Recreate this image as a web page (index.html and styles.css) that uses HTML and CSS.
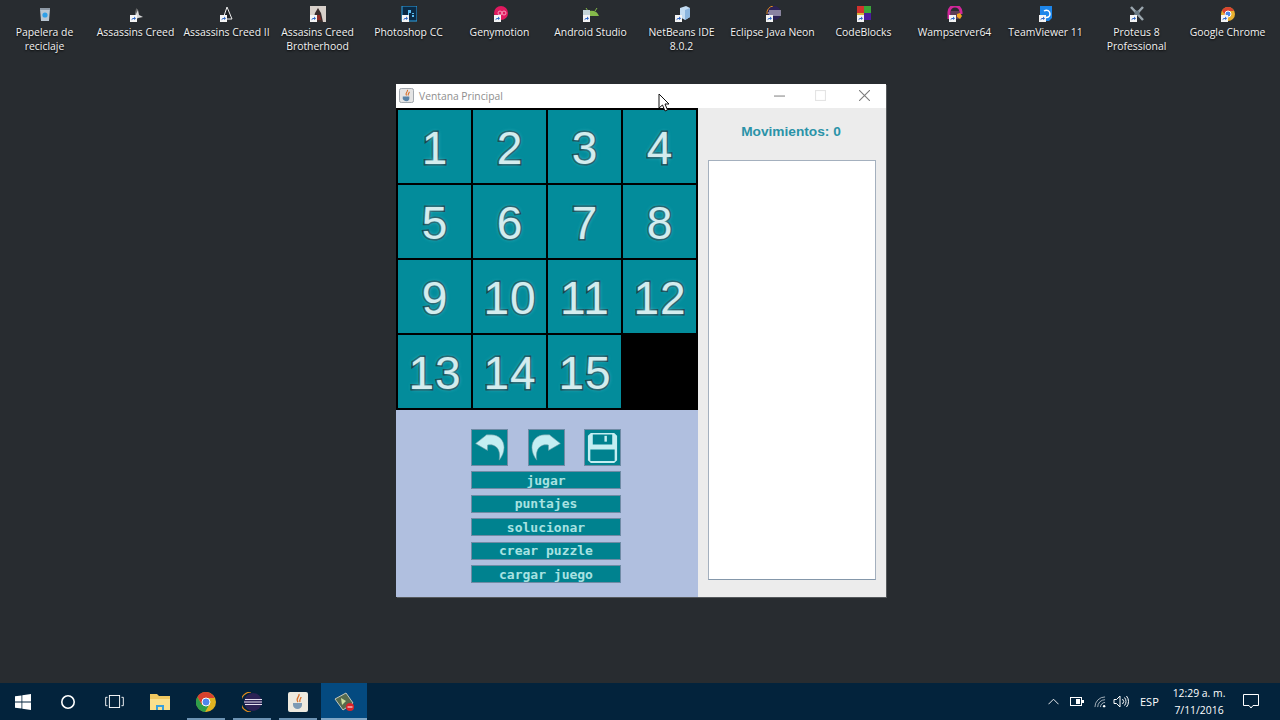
FILE: index.html
```html
<!DOCTYPE html>
<html lang="es">
<head>
  <meta charset="UTF-8">
  <title>Ventana Principal</title>
  <link rel="stylesheet" href="styles.css">
</head>
<body>
  <svg class="sprite" width="0" height="0">
    <symbol id="arrow" viewBox="0 0 7 7">
      <rect width="7" height="7" fill="#f4f4f4"/>
      <path d="M1.5 5.5 C1.5 3.5 2.5 3 4 3 V1.6 L6 3.5 4 5 V4 C3 4 2.2 4.4 1.5 5.5Z" fill="#2a66c8"/>
    </symbol>
  </svg>

  <main class="desktop">
    <section class="icons">
      <div class="icon">
        <svg viewBox="0 0 16 16"><path d="M3 3h10l-1 12H4z" fill="#b9c6d2"/><path d="M3 2h10v2H3z" fill="#8d99a5"/><circle cx="8" cy="9" r="2.6" fill="#2f9fe8"/></svg>
        <span>Papelera de<br>reciclaje</span>
      </div>
      <div class="icon">
        <svg viewBox="0 0 16 16"><path d="M8 3l2 1 1 5 4 2-5 1-3 2z" fill="#d9d9d9"/><path d="M8 2l2 2-2 4z" fill="#666"/><use href="#arrow" x="2" y="9" width="7" height="7"/></svg>
        <span>Assassins Creed</span>
      </div>
      <div class="icon">
        <svg viewBox="0 0 16 16"><path d="M8 1l5 12H4z" fill="#1f2226" stroke="#eee" stroke-width="1"/><use href="#arrow" x="1" y="9" width="7" height="7"/></svg>
        <span>Assassins Creed II</span>
      </div>
      <div class="icon">
        <svg viewBox="0 0 16 16"><rect width="16" height="16" fill="#d8d0ca"/><path d="M8 2l3 5 2 9H3l2-9z" fill="#3a2c2c"/><path d="M6 9h4l1 5H7z" fill="#8c2a25"/><use href="#arrow" x="0" y="9" width="7" height="7"/></svg>
        <span>Assasins Creed<br>Brotherhood</span>
      </div>
      <div class="icon">
        <svg viewBox="0 0 16 16"><rect x="1" y="0" width="15" height="15" fill="#0b2a45" stroke="#2fa3e6"/><rect x="6" y="4" width="7" height="7" fill="#0b2a45"/><path d="M7 4h3v3H8v3H7zM11 7h2v1h-2v1h2v2h-2z" fill="#5bbcf0"/><use href="#arrow" x="1" y="9" width="7" height="7"/></svg>
        <span>Photoshop CC</span>
      </div>
      <div class="icon">
        <svg viewBox="0 0 16 16"><circle cx="9" cy="7" r="7" fill="#e0195f"/><circle cx="8" cy="7" r="2" fill="none" stroke="#f59ab9"/><circle cx="12" cy="7" r="2" fill="none" stroke="#f59ab9"/><use href="#arrow" x="2" y="9" width="7" height="7"/></svg>
        <span>Genymotion</span>
      </div>
      <div class="icon">
        <svg viewBox="0 0 16 16"><path d="M1 13a8 8 0 0 1 15 0z" transform="translate(0 -3)" fill="#84b94a"/><path d="M3 2l2 3M14 2l-2 3" stroke="#84b94a"/><rect x="0" y="4" width="7" height="8" fill="#c4d4d8"/><use href="#arrow" x="0" y="9" width="7" height="7"/></svg>
        <span>Android Studio</span>
      </div>
      <div class="icon">
        <svg viewBox="0 0 16 16"><path d="M6 2l6-2 4 2v9l-5 3-5-3z" fill="#c3dcf2"/><path d="M11 4v10l5-3V2z" fill="#8bb5de"/><use href="#arrow" x="1" y="9" width="7" height="7"/></svg>
        <span>NetBeans IDE<br>8.0.2</span>
      </div>
      <div class="icon">
        <svg viewBox="0 0 16 16"><circle cx="9" cy="7" r="7" fill="#2c2255"/><path d="M4 5h12M3 7h13M4 9h12" stroke="#e6e2f0"/><path d="M8 0a7 7 0 0 0-6 8" fill="none" stroke="#e08a1e"/><use href="#arrow" x="1" y="9" width="7" height="7"/></svg>
        <span>Eclipse Java Neon</span>
      </div>
      <div class="icon">
        <svg viewBox="0 0 16 16"><rect x="1" y="0" width="7" height="7" fill="#d2322d"/><rect x="8" y="0" width="7" height="7" fill="#3aa53a"/><rect x="8" y="7" width="7" height="7" fill="#4a1d9c"/><rect x="1" y="7" width="7" height="7" fill="#d9b23a"/><use href="#arrow" x="1" y="9" width="7" height="7"/></svg>
        <span>CodeBlocks</span>
      </div>
      <div class="icon">
        <svg viewBox="0 0 16 16"><path d="M2 13V6a6 6 0 0 1 12 0v2" fill="none" stroke="#d0269a" stroke-width="3"/><rect x="4" y="5" width="8" height="8" fill="#5a3d56"/><path d="M10 8l3-1 2 3-2 3-3-2z" fill="#f0a020"/><use href="#arrow" x="2" y="9" width="7" height="7"/></svg>
        <span>Wampserver64</span>
      </div>
      <div class="icon">
        <svg viewBox="0 0 16 16"><path d="M2 0h12v12l-3 3H2z" fill="#1d86ea"/><path d="M6 5c3-2 6 0 6 3s-3 4-5 3" fill="none" stroke="#fff" stroke-width="1.5"/><use href="#arrow" x="1" y="9" width="7" height="7"/></svg>
        <span>TeamViewer 11</span>
      </div>
      <div class="icon">
        <svg viewBox="0 0 16 16"><path d="M2 1l12 13M14 1L2 14" stroke="#9aa6ae" stroke-width="2.5"/><circle cx="8" cy="7" r="2.5" fill="#6a7a85"/><use href="#arrow" x="1" y="9" width="7" height="7"/></svg>
        <span>Proteus 8<br>Professional</span>
      </div>
      <div class="icon">
        <svg viewBox="0 0 16 16"><circle cx="8" cy="8" r="7" fill="#e8b030"/><path d="M8 1a7 7 0 0 0-6 3.5L5 9l3-4h6A7 7 0 0 0 8 1z" fill="#d8432f"/><circle cx="8" cy="8" r="3" fill="#4a86e8" stroke="#fff"/><use href="#arrow" x="1" y="9" width="7" height="7"/></svg>
        <span>Google Chrome</span>
      </div>
    </section>

    <div class="window">
      <header class="titlebar">
        <svg class="java-icon" viewBox="0 0 16 16">
          <rect x="0.5" y="0.5" width="15" height="15" rx="2" fill="#e4e4e4" stroke="#9aa0a6"/>
          <path d="M9 2c1 2-3 3-1 6M11 4c0 2-2 2-1 4" fill="none" stroke="#d8702a" stroke-width="1.2"/>
          <path d="M4 9h7v2c0 2-1 3-3 3s-4-1-4-3z" fill="#5a84a8"/>
        </svg>
        <span class="title">Ventana Principal</span>
        <div class="controls">
          <svg viewBox="0 0 10 10"><path d="M0 5.500h10" stroke="#8a8a8a"/></svg>
          <svg viewBox="0 0 10 10"><rect x="0.5" y="0.5" width="9" height="9" fill="none" stroke="#e4e4e4"/></svg>
          <svg class="close" viewBox="0 0 10 10"><path d="M0 0l10 10M10 0L0 10" stroke="#7c7c7c"/></svg>
        </div>
      </header>
      <div class="content">
        <div class="left">
          <div class="board">
            <div class="tile">1</div>
            <div class="tile">2</div>
            <div class="tile">3</div>
            <div class="tile">4</div>
            <div class="tile">5</div>
            <div class="tile">6</div>
            <div class="tile">7</div>
            <div class="tile">8</div>
            <div class="tile">9</div>
            <div class="tile">10</div>
            <div class="tile">11</div>
            <div class="tile">12</div>
            <div class="tile">13</div>
            <div class="tile">14</div>
            <div class="tile">15</div>
            <div class="tile empty"></div>
          </div>
          <div class="actions">
            <div class="tools">
              <button class="tool" aria-label="deshacer">
                <svg viewBox="0 0 36 36"><path d="M3.700 14L15 5h5c8 0 13 6 13 13 0 5-2 9-5 13 1-6 0-11-3-13.500-3-2.500-6-2.500-9-2v5.500z" fill="#c4eef2" stroke="#6f9ca6" stroke-width="0.6"/></svg>
              </button>
              <button class="tool" aria-label="rehacer">
                <svg viewBox="0 0 36 36"><path d="M32.300 14L21 5h-5C8 5 3 11 3 18c0 5 2 9 5 13-1-6 0-11 3-13.500 3-2.500 6-2.500 9-2v5.500z" fill="#c4eef2" stroke="#6f9ca6" stroke-width="0.6"/></svg>
              </button>
              <button class="tool" aria-label="guardar">
                <svg viewBox="0 0 36 36">
                  <path d="M6 3h24l3 3v25l-3 3H6l-3-3V6z" fill="#c4eef2"/>
                  <path d="M8 4.500h20V15H8zM5.500 20h25v12h-25z" fill="#00828f"/>
                  <rect x="20" y="6" width="2.500" height="6" fill="#c4eef2"/>
                </svg>
              </button>
            </div>
            <button class="btn">jugar</button>
            <button class="btn">puntajes</button>
            <button class="btn">solucionar</button>
            <button class="btn">crear puzzle</button>
            <button class="btn">cargar juego</button>
          </div>
        </div>
        <aside class="side">
          <p class="moves">Movimientos: 0</p>
          <div class="log"></div>
        </aside>
      </div>
    </div>

    <svg class="cursor" viewBox="0 0 12 20">
      <path d="M1 1v14l3.5-3 2.5 6 2.5-1-2.5-6H11z" fill="#fff" stroke="#111"/>
    </svg>
  </main>

  <footer class="taskbar">
    <div class="task"><svg viewBox="0 0 16 16"><path d="M0 2.300l6.500-.9v6.200H0zM7.300 1.300L16 0v7.600H7.300zM0 8.400h6.500v6.200L0 13.700zM7.300 8.400H16V16l-8.700-1.200z" fill="#fff"/></svg></div>
    <div class="task"><svg viewBox="0 0 16 16"><circle cx="8" cy="8" r="6.200" fill="none" stroke="#fff" stroke-width="1.600"/></svg></div>
    <div class="task"><svg class="wide" viewBox="0 0 20 14"><rect x="4.500" y="0.500" width="11" height="13" fill="none" stroke="#fff"/><path d="M2.500 2.500H.5v9h2M17.500 2.500h2v9h-2" fill="none" stroke="#fff"/></svg></div>
    <div class="task app"><svg class="big" viewBox="0 0 20 18"><path d="M0 1h7l2 2h11v14H0z" fill="#f0c860"/><path d="M0 6h20v11H0z" fill="#fbe08c"/><path d="M6 17v-5h8v5h-2v-3H8v3z" fill="#3aa0dc"/></svg></div>
    <div class="task app open"><svg class="big" viewBox="0 0 20 20"><circle cx="10" cy="10" r="10" fill="#e0b320"/><path d="M10 0a10 10 0 0 0-8.700 5L6 13l4-7h8.600A10 10 0 0 0 10 0z" fill="#d8412f"/><path d="M1.300 5A10 10 0 0 0 9 20l4-7-7 0z" fill="#2e9e4a"/><circle cx="10" cy="10" r="4" fill="#4f86ec" stroke="#fff"/></svg></div>
    <div class="task app open"><svg class="big" viewBox="0 0 20 20"><circle cx="11" cy="10" r="9" fill="#2c2255"/><path d="M3 7.500h17M2 10h18M3 12.500h17" stroke="#e6e2f0"/><path d="M9 0a10 10 0 0 0 0 20" fill="none" stroke="#e08a1e" stroke-width="1.200"/></svg></div>
    <div class="task app open"><svg class="big" viewBox="0 0 20 20"><rect width="20" height="20" rx="2" fill="#eeeadf"/><path d="M11 2c1 3-4 4-1 8M13 5c0 2-2 2-1 5" fill="none" stroke="#d8702a" stroke-width="1.300"/><path d="M5 11h9v2c0 2-2 4-4.500 4S5 15 5 13z" fill="#7d9bb5"/></svg></div>
    <div class="task app active"><svg class="big" viewBox="0 0 20 20"><path d="M1 7l11-6 7 10-10 7z" fill="#566b4e" stroke="#c4c8bc"/><path d="M7 6l5 3-4 4z" fill="#cfe0a0"/><circle cx="16" cy="15" r="4" fill="#d9232a"/><path d="M13.500 15h5" stroke="#fff"/></svg></div>

    <div class="tray">
      <svg class="t-chev" viewBox="0 0 12 7"><path d="M.5 6.500L6 1l5.500 5.500" fill="none" stroke="#fff"/></svg>
      <svg class="t-batt" viewBox="0 0 14 9"><rect x="0.500" y="0.500" width="11" height="8" fill="none" stroke="#fff"/><rect x="6" y="2" width="4" height="5" fill="#fff"/><rect x="12" y="3" width="2" height="3" fill="#fff"/></svg>
      <svg class="t-wifi" viewBox="0 0 13 13"><path d="M1 12a11 11 0 0 1 11-11M4 12a8 8 0 0 1 8-8M7 12a5 5 0 0 1 5-5" fill="none" stroke="#aeb9c2"/><circle cx="11" cy="11" r="1.300" fill="#fff"/></svg>
      <svg class="t-vol" viewBox="0 0 16 13"><path d="M1 4.500h2.500L7 1v11L3.500 8.500H1z" fill="none" stroke="#fff"/><path d="M9.500 4a3.500 3.500 0 0 1 0 5M11.500 2.500a6 6 0 0 1 0 8M13.500 1a8.500 8.500 0 0 1 0 11" fill="none" stroke="#fff"/></svg>
      <span class="lang">ESP</span>
      <div class="clock">12:29 a. m.<br>7/11/2016</div>
      <svg class="t-note" viewBox="0 0 16 15"><path d="M.5.500h15v11H10l-2 2.500-2-2.500H.5z" fill="none" stroke="#fff"/></svg>
    </div>
  </footer>
</body>
</html>
```

FILE: styles.css
```css
* { box-sizing: border-box; }
html, body { margin: 0; padding: 0; }
body { width: 1280px; height: 720px; overflow: hidden; background: #282c30; font-family: "Open Sans", "Noto Sans", sans-serif; }
.sprite { position: absolute; }

.desktop { position: relative; height: 683px; }
.icons { display: grid; grid-template-columns: repeat(14, 91px); margin-left: -1px; padding-top: 6px; }
.icon { display: flex; flex-direction: column; align-items: center; text-align: center; color: #f2f2f2; font-size: 10.4px; line-height: 14px; text-shadow: 0 1px 2px #000; }
.icon svg { width: 16px; height: 16px; margin-bottom: 3px; }

.window { position: absolute; left: 396px; top: 84px; width: 490px; height: 513px; background: #ececec; box-shadow: 1px 1px 0 #55595c; }
.titlebar { display: flex; align-items: center; height: 24px; background: #fff; padding: 0 0 1px 3px; }
.java-icon { width: 15px; height: 15px; }
.title { margin-left: 5px; font-size: 10.3px; color: #8e8e8e; }
.controls { display: flex; align-items: center; margin-left: auto; gap: 30px; padding-right: 16px; }
.controls svg { width: 11px; height: 11px; display: block; }
.controls .close { margin-left: 3px; }
.content { display: flex; height: 489px; }

.left { width: 302px; }
.board { display: grid; grid-template-columns: repeat(4, 73px); grid-auto-rows: 73px; gap: 2px; padding: 2px; background: #000; }
.tile { display: flex; align-items: center; justify-content: center; padding: 2px 0 0 1px; background: #038c9b; color: #d4ecee; font-family: "Liberation Sans", Arial, sans-serif; font-size: 46px; line-height: 1; letter-spacing: 1px; -webkit-text-stroke: 3px #1a3a44; paint-order: stroke fill; text-shadow: 0 0 4px #4fc4d0; }
.tile.empty { background: #000; }

.actions { display: flex; flex-direction: column; align-items: center; gap: 5.5px; height: 187px; padding: 19px 2px 0 0; background: #b0bfdf; }
.tools { display: flex; justify-content: space-between; width: 150px; margin-bottom: -0.5px; }
.tool { width: 37px; height: 37px; padding: 0; background: #00828f; border: 1px solid #6f8ba5; display: flex; align-items: center; justify-content: center; }
.tool svg { width: 35px; height: 35px; display: block; }
.btn { width: 150px; height: 18px; padding: 0; background: #00828f; border: 1px solid #6f8ba5; color: #a8e2e2; font-family: "DejaVu Sans Mono", monospace; font-size: 13px; font-weight: bold; line-height: 15px; }

.side { flex: 1; padding: 0 10px 17px; display: flex; flex-direction: column; }
.moves { margin: 16px 0 0 -2px; height: 36px; text-align: center; font-family: "Liberation Sans", Arial, sans-serif; font-size: 13.7px; font-weight: bold; color: #2a93a8; line-height: 15px; }
.log { flex: 1; background: #fff; border: 1px solid #a4b0be; border-bottom-color: #8497aa; }

.cursor { position: absolute; left: 658px; top: 93px; width: 12px; height: 20px; }

.taskbar { display: flex; height: 37px; background: #03233c; }
.task { width: 45.67px; height: 37px; display: flex; align-items: center; justify-content: center; position: relative; }
.task.app { width: 46px; }
.task svg { width: 16px; height: 16px; }
.task svg.wide { width: 19px; height: 13px; }
.task svg.big { width: 20px; height: 20px; }
.task.open::after, .task.active::after { content: ""; position: absolute; left: 4px; right: 4px; bottom: 0; height: 2px; background: #6d93b3; }
.task.active { background: #044a80; }
.task.active::after { left: 0; right: 0; background: #7fa6c6; }

.tray { display: flex; align-items: center; margin-left: auto; color: #fff; font-size: 10.4px; height: 37px; }
.t-chev { width: 11px; height: 7px; margin-right: 11px; }
.t-batt { width: 14px; height: 9px; margin-right: 10px; }
.t-wifi { width: 12px; height: 12px; margin-right: 7px; }
.t-vol { width: 16px; height: 13px; margin-right: 11px; }
.lang { width: 20px; margin-right: 11px; font-size: 11px; }
.clock { width: 56px; text-align: center; line-height: 17px; margin-right: 16px; white-space: nowrap; }
.t-note { width: 16px; height: 15px; margin-right: 21px; }
```
